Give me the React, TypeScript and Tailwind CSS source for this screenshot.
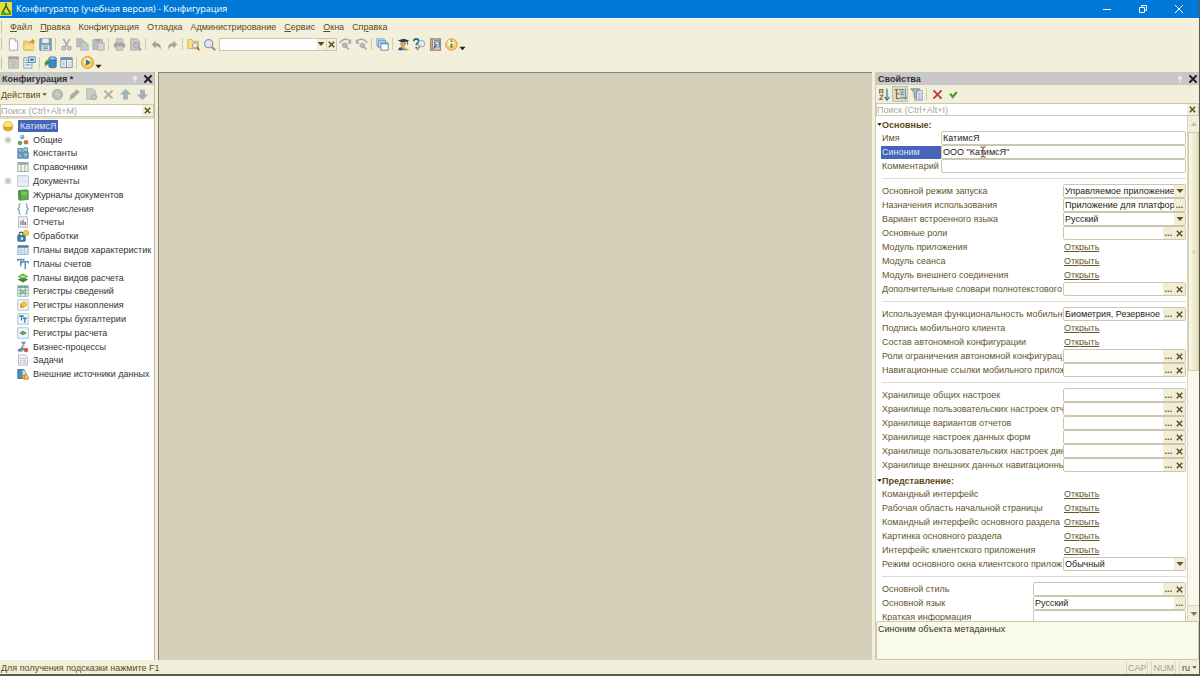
import React, { useState } from "react";

type IconName =
  | "newFile" | "open" | "save" | "cut" | "copy" | "paste" | "print" | "preview"
  | "undo" | "redo" | "findFolder" | "zoom" | "findNext" | "findPrev" | "windows"
  | "student" | "helpSearch" | "bookSearch" | "info" | "window" | "configTree"
  | "updateDb" | "form" | "play" | "add" | "edit" | "addCopy" | "remove" | "up" | "down"
  | "sphere" | "common" | "constants" | "catalogs" | "documents" | "journals" | "enums"
  | "reports" | "processing" | "characteristics" | "accounts" | "calcPlans" | "infoReg"
  | "accumReg" | "accountReg" | "calcReg" | "business" | "tasks" | "external"
  | "sort" | "category" | "filter" | "cancel" | "accept";

const G = "#a9abab";

const art: Record<IconName, React.ReactNode> = {
  newFile: <><path d="M3 1h7l3 3v11H3z" fill="#fff" stroke="#8ba3b8" /><path d="M10 1v3h3" fill="#cfe0ec" stroke="#8ba3b8" /></>,
  open: <><path d="M1 4h5l1 1h6v10H1z" fill="#f0cf6e" stroke="#cfa646" /><path d="M2 8h11v6H2z" fill="#fbe08c" /><path d="M8 6c0-3 2-3 3-3V1l4 3-4 3V5z" fill="#e0902c" /></>,
  save: <><path d="M1 1h14v14H1z" fill="#7f9fb5" stroke="#5d8099" /><path d="M4 1h8v5H4z" fill="#e9f1f6" /><path d="M3 9h10v6H3z" fill="#d3e1ea" /><path d="M5 11h6M5 13h6" stroke="#5d8099" /></>,
  cut: <><path d="M4 1l6 10M12 1L6 11" stroke={G} strokeWidth="2" /><circle cx="4.500" cy="12.500" r="2" fill="none" stroke={G} strokeWidth="2" /><circle cx="11.500" cy="12.500" r="2" fill="none" stroke={G} strokeWidth="2" /></>,
  copy: <><path d="M1 1h6l3 3v7H1z" fill="#bcc0c1" stroke={G} /><path d="M6 5h6l3 3v7H6z" fill="#c5c9c9" stroke={G} /></>,
  paste: <><path d="M1 2h12v12H1z" fill="#bbbfbf" stroke={G} /><path d="M4 1h6v3H4z" fill="#a0a2a2" /><path d="M7 6h8v9H7z" fill="#d2d5d4" stroke={G} /></>,
  print: <><path d="M4 1h8v5H4z" fill="#c9cbc9" stroke={G} /><rect x="1" y="6" width="14" height="6" rx="2" fill="#a3a6a6" /><path d="M4 10h8v5H4z" fill="#d0d0ce" stroke={G} /></>,
  preview: <><path d="M2 1h8l3 3v11H2z" fill="#c6c9c8" stroke={G} /><circle cx="9" cy="9" r="3.500" fill="#bfc3c4" stroke="#999" /><path d="M12 12l3 3" stroke="#999" strokeWidth="2" /></>,
  undo: <path d="M7 3v3c5 0 7 3 6 8-1-3-3-4-6-4v3L2 8z" fill="#9da59a" />,
  redo: <path d="M9 3v3c-5 0-7 3-6 8 1-3 3-4 6-4v3l5-5z" fill="#9dac9a" />,
  findFolder: <><path d="M1 2h5l1 2h7v9H1z" fill="#fadf87" stroke="#d0a445" /><circle cx="10" cy="9" r="3.500" fill="#dcebf5" stroke="#ad8b5c" /><path d="M12.500 11.500L15 15" stroke="#a6623c" strokeWidth="2" /></>,
  zoom: <><circle cx="7" cy="7" r="5" fill="#dce9f5" stroke="#8896a8" strokeWidth="1.500" /><path d="M11 11l4 4" stroke="#b88164" strokeWidth="2.500" /></>,
  findNext: <><path d="M1 6c3-5 9-6 13-2" fill="none" stroke={G} strokeWidth="2" /><path d="M15 1v6h-5z" fill={G} /><circle cx="7" cy="9" r="3" fill="#b3b8bb" stroke={G} /><path d="M9 11l3 3" stroke={G} strokeWidth="2" /></>,
  findPrev: <><path d="M15 6C12 1 6 0 2 4" fill="none" stroke={G} strokeWidth="2" /><path d="M1 1v6h5z" fill={G} /><circle cx="9" cy="9" r="3" fill="#b3b8bb" stroke={G} /><path d="M11 11l3 3" stroke={G} strokeWidth="2" /></>,
  windows: <><path d="M1 1h9v9H1z" fill="#d5e5ef" stroke="#6f9ab8" /><path d="M3 3h9v9H3z" fill="#bcd7e8" stroke="#5f8fb0" /><path d="M6 6h9v9H6z" fill="#fff" stroke="#417aa3" /><path d="M6 6h9v2H6z" fill="#6ea5c8" /></>,
  student: <><path d="M1 3l7-2 7 2-7 3z" fill="#173d61" /><path d="M4 5h7v3l-3 3-4-2z" fill="#d99a65" /><path d="M13 3v5" stroke="#173d61" /><path d="M2 15l4-5 3 1 5 4z" fill="#3f84b3" /><path d="M7 10l8 4-2 1-7-3z" fill="#e8bf3a" /><path d="M1 14l3-3 2 4z" fill="#2e4350" /></>,
  helpSearch: <><path d="M1 4c0-4 6-4 6 0 0 2-3 2-3 5M4 11v2" fill="none" stroke="#2c6479" strokeWidth="2" /><circle cx="10.500" cy="7" r="4" fill="#dcecf8" stroke="#7d9ab4" /><path d="M8 10l-3 5" stroke="#c47b52" strokeWidth="2" /></>,
  bookSearch: <><path d="M2 1h12v14H2z" fill="#dcd4c8" stroke="#a5835f" strokeWidth="1.500" /><path d="M4 1v14" stroke="#a5835f" strokeWidth="1.500" /><path d="M7 3h6v8H7z" fill="#cfe4f5" stroke="#467aa5" /><circle cx="10" cy="6.500" r="2" fill="#fff" stroke="#467aa5" /><path d="M9 8l-3 5" stroke="#40688c" strokeWidth="1.500" /></>,
  info: <><circle cx="8" cy="8" r="7" fill="#f8cf7e" stroke="#c98d35" /><circle cx="7" cy="6" r="4" fill="#fff0bd" /><path d="M8 7v5M8 3v2" stroke="#577a28" strokeWidth="2.200" /></>,
  window: <><path d="M2 1h12v14H2z" fill="#cdcdc8" stroke={G} /><path d="M2 1h12v3H2z" fill="#a5a8aa" /><path d="M5 7h6M5 10h6M5 13h4" stroke={G} /></>,
  configTree: <><path d="M1 2h10v13H1z" fill="#e9f2f8" stroke="#7196af" /><path d="M3 5h4M3 8h6M3 11h6" stroke="#4b7da0" /><path d="M7 1h8v7H7z" fill="#d9e9f5" stroke="#457a9f" /><path d="M9 3h4v3H9z" fill="#3f7ba8" /></>,
  updateDb: <><path d="M6 3v10c0 2 9 2 9 0V3z" fill="#3a8dc6" stroke="#28658f" /><ellipse cx="10.500" cy="3" rx="4.500" ry="2" fill="#9bd1ef" stroke="#28658f" /><path d="M1 14V7h2V4l4 4-4 4V9" fill="#39883c" /></>,
  form: <><path d="M1 2h14v12H1z" fill="#eef3f5" stroke="#637d90" /><path d="M1 2h14v3H1z" fill="#7391a7" /><path d="M8 5v9" stroke="#637d90" /><path d="M3 7h3M3 9h3M3 11h3M10 8h3M10 11h3" stroke="#9aacb8" /></>,
  play: <><circle cx="8" cy="8" r="7.300" fill="#ffcf50" stroke="#b9882c" /><circle cx="7" cy="6" r="4" fill="#fff0ad" /><path d="M6 4l6 4-6 4z" fill="#3274a3" /></>,
  add: <><circle cx="8" cy="8" r="7" fill="#b4beb0" /><path d="M8 4v8M4 8h8" stroke="#c9d0c5" strokeWidth="2" /></>,
  edit: <path d="M2 14l1-5 8-7 3 3-8 8z" fill="#a7aea1" stroke="#b7bbaf" />,
  addCopy: <><path d="M2 1h8l3 3v10H2z" fill="#c7cdc8" stroke="#b1b8b2" /><circle cx="11" cy="11" r="4" fill="#aeb9aa" /><path d="M11 9v4M9 11h4" stroke="#d8ded4" /></>,
  remove: <path d="M3 3l10 10M13 3L3 13" stroke="#b7afa4" strokeWidth="2.500" />,
  up: <path d="M8 1l7 7h-4v6H5V8H1z" fill="#a5b1b9" />,
  down: <path d="M8 15l7-7h-4V2H5v6H1z" fill="#a5b1b9" />,
  sphere: <><circle cx="8" cy="8" r="7" fill="#f0c545" /><path d="M1 9a7 6 0 0014 0z" fill="#dca52c" /><ellipse cx="8" cy="6" rx="5" ry="3" fill="#fbe38a" /></>,
  common: <><circle cx="7" cy="4" r="3" fill="#73aacb" /><circle cx="4" cy="12" r="3" fill="#58a854" /><circle cx="12" cy="11" r="3" fill="#c66f4a" /><circle cx="6" cy="3" r="1" fill="#d6ecf8" /></>,
  constants: <><path d="M1 2h6v6H1zM1 9h6v6H1zM8 7h7v8H8z" fill="#78a9c6" stroke="#39789e" /><path d="M9 1h5v5H9z" fill="#a9cce0" stroke="#39789e" /><path d="M3 4h2M3 11h2M10 10h3" stroke="#e4f1f8" /></>,
  catalogs: <><path d="M1 2h14v12H1z" fill="#f6f4de" stroke="#8297a3" /><path d="M1 2h14v3H1z" fill="#8cb0c5" /><path d="M5.500 2v12M10.500 2v12" stroke="#8297a3" /></>,
  documents: <><path d="M1 1h14v14H1z" fill="#edf4f8" stroke="#92afc4" /><path d="M4 4h6M4 7h8M4 10h8" stroke="#c4d7e4" /></>,
  journals: <><path d="M2 2l11-1 2 1v12l-12 1-1-2z" fill="#5fb04a" stroke="#40872f" /><path d="M4 2v12" stroke="#2d7428" /><path d="M6 5h7M6 7h7" stroke="#a4d68f" /></>,
  enums: <path d="M5 1C2 1 3 4 3 6L1 8l2 2c0 3-1 5 2 5M11 1c3 0 2 3 2 5l2 2-2 2c0 3 1 5-2 5" fill="none" stroke="#7f9fb2" strokeWidth="1.600" />,
  reports: <><path d="M2 1h12v14H2z" fill="#eef2f6" stroke="#9aaebd" /><path d="M5 12V7" stroke="#d17a67" strokeWidth="2" /><path d="M8 12V5" stroke="#628fb8" strokeWidth="2" /><path d="M11 12V8" stroke="#c44c44" strokeWidth="2" /></>,
  processing: <><rect x="1" y="7" width="10" height="8" rx="1" fill="#3d7fae" stroke="#23587e" /><path d="M3 7V5c0-3 5-3 5 0v2" fill="none" stroke="#23587e" strokeWidth="1.500" /><path d="M5 10h3v3H5z" fill="#e5f2fa" /><circle cx="12" cy="4" r="3.500" fill="#f2ca43" stroke="#cfa131" /></>,
  characteristics: <><path d="M1 2h14v12H1z" fill="#e4edf2" stroke="#8aa7ba" /><path d="M1 2h14v3H1z" fill="#477d9e" /><path d="M5 5v9M10 5v9M1 8h14M1 11h14" stroke="#b0c4d0" /></>,
  accounts: <path d="M1 4V2h8v2M5 2v9M7 7V5h8v2M11 5v10" fill="none" stroke="#5f97b8" strokeWidth="2" />,
  calcPlans: <><path d="M1 10l7-3 7 3-7 4z" fill="#38862e" /><path d="M1 6l7-4 7 4-7 4z" fill="#5dac3e" /><path d="M5 6h6" stroke="#d4edb9" strokeWidth="2" /></>,
  infoReg: <><path d="M1 1h14v14H1z" fill="#edf5ef" stroke="#719c9e" /><path d="M1 1h14v3H1z" fill="#7eaaa9" /><path d="M5 2v12M11 2v12M2 7h12M2 11h12" stroke="#4f9270" /><path d="M6 7h4v4H6z" fill="#80bb8a" /></>,
  accumReg: <><path d="M1 1h14v14H1z" fill="#f7f8f4" stroke="#92b3c6" /><path d="M4 6h5v6H4z" fill="#deaa32" /><circle cx="9.500" cy="7" r="3.300" fill="#f2c749" stroke="#d29f30" /></>,
  accountReg: <><path d="M1 1h14v14H1z" fill="#f3f8fb" stroke="#92b3c6" /><path d="M3 4h6M6 4v6M8 7h5M10.500 7v6" stroke="#377ba7" strokeWidth="1.700" /></>,
  calcReg: <><path d="M1 1h14v14H1z" fill="#f3f8fb" stroke="#92b3c6" /><path d="M3 8l5-3 5 3-5 3z" fill="#419339" /><path d="M6 8h4" stroke="#b8dda7" /></>,
  business: <><path d="M5 1h7l-3 5z" fill="#5a98c6" /><circle cx="8" cy="7" r="2" fill="#e0ad80" /><path d="M1 14c0-5 4-5 6-2l1 2z" fill="#4a7eae" /><circle cx="12" cy="12" r="3" fill="#d85b40" /><path d="M5 9l5 3" stroke="#507796" strokeWidth="2" /></>,
  tasks: <><path d="M2 1h9l3 3v11H2z" fill="#edf0f5" stroke="#9fb1c2" /><path d="M4 6h2M4 9h2M4 12h2" stroke="#d5785e" /><path d="M8 6h4M8 9h4M8 12h4" stroke="#91a7bb" /></>,
  external: <><path d="M1 2h8v12H1z" fill="#4d8dbb" stroke="#2f658c" /><path d="M7 3h4v9H7z" fill="#d8e9f3" stroke="#709bb7" /><circle cx="9" cy="12" r="2.500" fill="#e5ad31" stroke="#ad7b1c" /><path d="M12 7l3 5v3h-5v-3z" fill="#f1c85a" stroke="#ad7b1c" /></>,
  sort: <><path d="M2 7V2h4v5M2 5h4M2 9h4l-4 5h4" fill="none" stroke="#776e60" strokeWidth="1.300" /><path d="M11 1v12M8 11l3 4 3-4" fill="none" stroke="#4787a3" strokeWidth="1.700" /></>,
  category: <><path d="M1 2h4M3 2v11h4M3 7h4" fill="none" stroke="#796f52" strokeWidth="1.300" /><path d="M6 2h6M8 5h4M8 8h4M8 12h4" stroke="#5a8eaa" strokeWidth="1.600" /><path d="M14 1v12M12 11l2 3 2-3" fill="none" stroke="#3e7b9b" /></>,
  filter: <><path d="M6 3h9v12H6z" fill="#e0eaf0" stroke="#7695aa" /><path d="M10 7h3M10 10h3M10 13h3" stroke="#628ba5" /><path d="M1 1h11L8 6v7l-3-2V6z" fill="#a8b5ba" stroke="#74858c" /></>,
  cancel: <path d="M3 3l10 10M13 3L3 13" stroke="#c23a33" strokeWidth="2.300" />,
  accept: <path d="M4 7l3 4 5-6" fill="none" stroke="#489c26" strokeWidth="2.700" />,
};

function Icon({ name, className = "size-[13px]" }: { name: IconName; className?: string }) {
  return (
    <svg viewBox="0 0 16 16" className={`${className} shrink-0`} aria-hidden="true">
      {art[name]}
    </svg>
  );
}

function Cross({ className = "size-[9px]" }: { className?: string }) {
  return (
    <svg viewBox="0 0 10 10" className={`${className} shrink-0`} aria-hidden="true">
      <path d="M2 2l6 6M8 2L2 8" stroke="currentColor" strokeWidth="1.700" />
    </svg>
  );
}

function Caret({ className = "size-2" }: { className?: string }) {
  return (
    <svg viewBox="0 0 8 8" className={`${className} shrink-0`} aria-hidden="true">
      <path d="M0.500 2h7L4 6z" fill="currentColor" />
    </svg>
  );
}

function Tool({ name, label, active }: { name: IconName; label: string; active?: boolean }) {
  return (
    <button
      type="button"
      aria-label={label}
      className={`flex size-4 shrink-0 items-center justify-center ${active ? "border border-[#c5bfa4] bg-[#e0dbc0]" : ""}`}
    >
      <Icon name={name} />
    </button>
  );
}

function Divider() {
  return <span className="mx-0.5 h-3 w-px shrink-0 bg-[#cfcab0]" />;
}

function Grip() {
  return <span className="mr-[3px] h-3 w-px shrink-0 bg-[#c5c0a8]" />;
}

function PanelTitle({ title }: { title: string }) {
  return (
    <header className="flex h-[13px] shrink-0 items-center bg-[#c8c8c8] pl-0.5">
      <h2 className="grow font-bold text-[#33312b]">{title}</h2>
      <button type="button" aria-label="Закрепить" className="mr-1 flex">
        <svg viewBox="0 0 6 8" className="h-2 w-1.5" aria-hidden="true">
          <circle cx="3" cy="3" r="1.500" fill="#dedede" stroke="#f4f4f4" />
          <path d="M3 5v3" stroke="#eee" />
        </svg>
      </button>
      <button type="button" aria-label="Закрыть" className="text-[#1c1c1c]">
        <Cross className="block size-3" />
      </button>
    </header>
  );
}

function PanelSearch({ hint }: { hint: string }) {
  return (
    <div className="flex h-[13px] shrink-0 border border-[#cdc9ac] bg-white">
      <input aria-label="Поиск" placeholder={hint} className="min-w-0 grow outline-none placeholder:text-[#a5a5a5]" />
      <button type="button" aria-label="Очистить" className="flex w-[11px] items-center justify-center bg-[#f2efdb] text-[#5e531b]">
        <Cross />
      </button>
    </div>
  );
}

const menus: [string, string, string][] = [
  ["", "Ф", "айл"], ["", "П", "равка"], ["Конфигурация", "", ""], ["Отладка", "", ""],
  ["Администрирование", "", ""], ["", "С", "ервис"], ["", "О", "кна"], ["Сп", "р", "авка"],
];

const tree: { icon: IconName; text: string; branch?: boolean }[] = [
  { icon: "common", text: "Общие", branch: true },
  { icon: "constants", text: "Константы" },
  { icon: "catalogs", text: "Справочники" },
  { icon: "documents", text: "Документы", branch: true },
  { icon: "journals", text: "Журналы документов" },
  { icon: "enums", text: "Перечисления" },
  { icon: "reports", text: "Отчеты" },
  { icon: "processing", text: "Обработки" },
  { icon: "characteristics", text: "Планы видов характеристик" },
  { icon: "accounts", text: "Планы счетов" },
  { icon: "calcPlans", text: "Планы видов расчета" },
  { icon: "infoReg", text: "Регистры сведений" },
  { icon: "accumReg", text: "Регистры накопления" },
  { icon: "accountReg", text: "Регистры бухгалтерии" },
  { icon: "calcReg", text: "Регистры расчета" },
  { icon: "business", text: "Бизнес-процессы" },
  { icon: "tasks", text: "Задачи" },
  { icon: "external", text: "Внешние источники данных" },
];

type Kind = "text" | "select" | "pick" | "pickClear" | "link";
type Prop = { label: string; kind: Kind; value?: string; selected?: boolean };

const open = (label: string): Prop => ({ label, kind: "link" });
const pick = (label: string, value = ""): Prop => ({ label, kind: "pickClear", value });

const naming: Prop[] = [
  { label: "Имя", kind: "text", value: "КатимсЯ" },
  { label: "Синоним", kind: "text", value: 'ООО "КатимсЯ"', selected: true },
  { label: "Комментарий", kind: "text" },
];
const launch: Prop[] = [
  { label: "Основной режим запуска", kind: "select", value: "Управляемое приложение" },
  { label: "Назначения использования", kind: "pick", value: "Приложение для платфор" },
  { label: "Вариант встроенного языка", kind: "select", value: "Русский" },
  pick("Основные роли"),
  open("Модуль приложения"),
  open("Модуль сеанса"),
  open("Модуль внешнего соединения"),
  pick("Дополнительные словари полнотекстового"),
];
const mobile: Prop[] = [
  pick("Используемая функциональность мобильно", "Биометрия, Резервное"),
  open("Подпись мобильного клиента"),
  open("Состав автономной конфигурации"),
  pick("Роли ограничения автономной конфигурац"),
  pick("Навигационные ссылки мобильного прилож"),
];
const storage: Prop[] = [
  pick("Хранилище общих настроек"),
  pick("Хранилище пользовательских настроек отч"),
  pick("Хранилище вариантов отчетов"),
  pick("Хранилище настроек данных форм"),
  pick("Хранилище пользовательских настроек дин"),
  pick("Хранилище внешних данных навигационных"),
];
const view: Prop[] = [
  open("Командный интерфейс"),
  open("Рабочая область начальной страницы"),
  open("Командный интерфейс основного раздела"),
  open("Картинка основного раздела"),
  open("Интерфейс клиентского приложения"),
  { label: "Режим основного окна клиентского прилож", kind: "select", value: "Обычный" },
];
const style: Prop[] = [
  pick("Основной стиль"),
  { label: "Основной язык", kind: "pick", value: "Русский" },
  { label: "Краткая информация", kind: "text" },
];

function PropRow({ prop, id, columns }: { prop: Prop; id: string; columns: string }) {
  const [value, setValue] = useState(prop.value ?? "");
  const labelTone = prop.selected ? "bg-[#4564ba] text-[#dfe6f8]" : "text-[#64552b]";
  const side = "flex w-[11px] shrink-0 items-center justify-center bg-[#f1edd6] text-[#5e531b]";
  return (
    <div className={`grid h-3.5 items-center ${columns}`}>
      <label htmlFor={id} className={`h-[13px] whitespace-nowrap pl-px leading-[13px] ${labelTone}`}>
        {prop.label}
      </label>
      {prop.kind === "link" ? (
        <a id={id} href="#" className="justify-self-start pl-px text-[#64552b] underline">Открыть</a>
      ) : (
        <div className="relative flex h-3.5 min-w-0 rounded-xs border border-[#cbc7ae] bg-white">
          {prop.kind === "select" ? (
            <>
              <select id={id} className="min-w-0 grow appearance-none pl-px text-[#262420] outline-none">
                <option>{prop.value}</option>
              </select>
              <span className={side}><Caret /></span>
            </>
          ) : (
            <input
              id={id}
              value={value}
              onChange={(e) => setValue(e.target.value)}
              className="min-w-0 grow pl-px text-[#262420] outline-none"
            />
          )}
          {(prop.kind === "pick" || prop.kind === "pickClear") && (
            <button type="button" aria-label={`Выбрать: ${prop.label}`} className={`${side} font-bold`}>...</button>
          )}
          {prop.kind === "pickClear" && (
            <button type="button" aria-label={`Очистить: ${prop.label}`} onClick={() => setValue("")} className={side}>
              <Cross />
            </button>
          )}
          {prop.selected && (
            <svg viewBox="0 0 8 12" className="absolute left-[37px] top-0 h-3 w-2" aria-hidden="true">
              <path d="M1.500 1h2l.5.500.500-.500h2M4 1.500v9M1.500 11h2l.500-.500.500.500h2" fill="none" stroke="#4b3a30" />
            </svg>
          )}
        </div>
      )}
    </div>
  );
}

function PropGroup({ name, items, columns }: { name: string; items: Prop[]; columns: string }) {
  return (
    <div>
      {items.map((p, i) => (
        <PropRow key={p.label} prop={p} id={`${name}-${i}`} columns={columns} />
      ))}
    </div>
  );
}

function Rule() {
  return <hr className="my-[5px] ml-px border-[#dcdad2]" />;
}

function GroupTitle({ children }: { children: React.ReactNode }) {
  return (
    <h3 className="-ml-1 flex h-[13px] items-center font-bold text-[#5b4b17]">
      <Caret className="size-[5px] text-black" />
      {children}
    </h3>
  );
}

const wide = "grid-cols-[182px_minmax(0,1fr)]";

export default function App() {
  return (
    <div className="flex h-screen flex-col overflow-hidden border-b-2 border-r border-[#5d5b50] bg-[#f2efdb] font-['Liberation_Sans',sans-serif] text-[9px] leading-[12px] text-[#5b4c22]">
      <div className="flex h-[18px] shrink-0 items-center bg-[#0078d7] text-white">
        <svg viewBox="0 0 12 14" className="h-3.5 w-3" aria-hidden="true">
          <path d="M0 0h12v14H0z" fill="#e9dc3c" />
          <path d="M6 1v3M6 4l-4 7M6 4l4 7" stroke="#2d5a2c" strokeWidth="1.500" />
          <path d="M1 12c2-3 3-3 5-1s3 0 5-3v5H1z" fill="#3fa337" />
        </svg>
        <h1 className="ml-1 grow font-['Open_Sans',sans-serif]">Конфигуратор (учебная версия) - Конфигурация</h1>
        <button type="button" aria-label="Свернуть" className="flex w-9 justify-center">
          <svg viewBox="0 0 10 10" className="size-2.5"><path d="M1 5.500h8" stroke="#fff" /></svg>
        </button>
        <button type="button" aria-label="Восстановить" className="flex w-9 justify-center">
          <svg viewBox="0 0 10 10" className="size-2.5" fill="none" stroke="#fff"><path d="M1.500 3.500h5v5h-5zM3.500 3V1.500h5v5H7" /></svg>
        </button>
        <button type="button" aria-label="Закрыть" className="mr-0.5 flex w-9 justify-center">
          <svg viewBox="0 0 10 10" className="size-2.5"><path d="M1 1l8 8M9 1L1 9" stroke="#fff" /></svg>
        </button>
      </div>

      <nav className="flex h-[17px] shrink-0 items-center border-t border-[#fbfaf0] pl-px">
        <span className="mr-2 h-3 w-px bg-[#c5c0a8]" />
        <div className="flex gap-2">
          {menus.map(([before, key, after]) => (
            <button type="button" key={before + key + after}>
              {before}<span className="underline">{key}</span>{after}
            </button>
          ))}
        </div>
      </nav>

      <div className="flex h-[18px] shrink-0 items-center pl-px">
        <Grip />
        <Tool name="newFile" label="Новый" />
        <Tool name="open" label="Открыть файл" />
        <Tool name="save" label="Сохранить" />
        <Divider />
        <Tool name="cut" label="Вырезать" />
        <Tool name="copy" label="Копировать" />
        <Tool name="paste" label="Вставить" />
        <Divider />
        <Tool name="print" label="Печать" />
        <Tool name="preview" label="Просмотр" />
        <Divider />
        <Tool name="undo" label="Отменить" />
        <Tool name="redo" label="Вернуть" />
        <Divider />
        <Tool name="findFolder" label="Поиск в файлах" />
        <Tool name="zoom" label="Найти" />
        <div className="ml-0.5 flex h-[13px] w-[118px] shrink-0 border border-[#cbc7ae] bg-white">
          <input aria-label="Строка поиска" className="min-w-0 grow outline-none" />
          <button type="button" aria-label="История поиска" className="flex w-[11px] items-center justify-center bg-[#f2efdb] text-[#5e4b1b]"><Caret /></button>
          <button type="button" aria-label="Очистить поиск" className="flex w-[11px] items-center justify-center border-l border-[#d9d5bf] bg-[#f2efdb] text-[#5e4b1b]"><Cross /></button>
        </div>
        <Tool name="findNext" label="Найти далее" />
        <Tool name="findPrev" label="Найти ранее" />
        <Divider />
        <Tool name="windows" label="Окна" />
        <Divider />
        <Tool name="student" label="Обучение" />
        <Tool name="helpSearch" label="Поиск в справке" />
        <Tool name="bookSearch" label="Синтакс-помощник" />
        <Tool name="info" label="О программе" />
        <button type="button" aria-label="Ещё" className="mt-2 text-[#2c2408]"><Caret className="block size-[7px]" /></button>
      </div>

      <div className="flex h-[19px] shrink-0 items-center pl-px">
        <Grip />
        <Tool name="window" label="Закрыть конфигурацию" />
        <Tool name="configTree" label="Открыть конфигурацию" />
        <Divider />
        <Tool name="updateDb" label="Обновить базу данных" />
        <Tool name="form" label="Окно конфигурации" />
        <Divider />
        <Tool name="play" label="Начать отладку" />
        <button type="button" aria-label="Ещё" className="mt-2 text-[#2c2408]"><Caret className="block size-[7px]" /></button>
      </div>

      <main className="flex min-h-0 grow">
        <section className="flex w-[155px] shrink-0 flex-col border-r border-[#bdb99f]">
          <PanelTitle title="Конфигурация *" />
          <div className="flex h-[19px] shrink-0 items-center gap-px">
            <button type="button" className="flex w-12 items-center gap-0.5 pl-px">
              Действия<Caret className="size-[5px]" />
            </button>
            <Tool name="add" label="Добавить" />
            <Tool name="edit" label="Изменить" />
            <Tool name="addCopy" label="Добавить копированием" />
            <Tool name="remove" label="Удалить" />
            <Tool name="up" label="Переместить вверх" />
            <Tool name="down" label="Переместить вниз" />
          </div>
          <PanelSearch hint="Поиск (Ctrl+Alt+M)" />
          <div className="min-h-0 grow border-t-2 border-[#e3dfc4] bg-white text-[#35332e]">
            <ul className="grid h-[262px] auto-rows-fr">
              <li className="flex items-center gap-1 pl-0.5">
                <Icon name="sphere" className="size-3" />
                <span className="bg-[#4564ba] px-0.5 text-[#dfe6f8]">КатимсЯ</span>
              </li>
              {tree.map((n) => (
                <li key={n.text} className="flex items-center whitespace-nowrap pl-1">
                  <span className="mr-[5px] flex w-2 justify-center">
                    {n.branch && (
                      <svg viewBox="0 0 8 8" className="size-2" aria-hidden="true">
                        <circle cx="4" cy="4" r="3" fill="#f3f3f3" stroke="#c9c9c9" />
                        <path d="M2.500 4h3M4 2.500v3" stroke="#8a8a8a" />
                      </svg>
                    )}
                  </span>
                  <Icon name={n.icon} className="mr-1 size-3" />
                  {n.text}
                </li>
              ))}
            </ul>
          </div>
        </section>

        <section aria-label="Рабочая область" className="ml-[3px] grow border-l border-t border-[#85837a] bg-[#d6d0bb]" />

        <section className="ml-[3px] flex w-[324px] shrink-0 flex-col border-l border-[#d2cdb2]">
          <PanelTitle title="Свойства" />
          <div className="flex h-[18px] shrink-0 items-center">
            <Tool name="sort" label="По алфавиту" />
            <Tool name="category" label="По категориям" active />
            <Tool name="filter" label="Только важные" />
            <Divider />
            <Tool name="cancel" label="Отменить изменения" />
            <Tool name="accept" label="Применить" />
          </div>
          <PanelSearch hint="Поиск (Ctrl+Alt+I)" />
          <div className="flex min-h-0 grow bg-white">
            <div className="min-w-0 grow overflow-hidden pl-[5px] pr-px pt-0.5">
              <GroupTitle>Основные:</GroupTitle>
              <PropGroup name="naming" items={naming} columns="grid-cols-[60px_minmax(0,1fr)]" />
              <Rule />
              <PropGroup name="launch" items={launch} columns={wide} />
              <Rule />
              <PropGroup name="mobile" items={mobile} columns={wide} />
              <Rule />
              <PropGroup name="storage" items={storage} columns={wide} />
              <div className="h-0.5" />
              <GroupTitle>Представление:</GroupTitle>
              <PropGroup name="view" items={view} columns={wide} />
              <Rule />
              <PropGroup name="style" items={style} columns="grid-cols-[152px_minmax(0,1fr)]" />
            </div>
            <div className="flex w-3 shrink-0 flex-col border-l border-[#dcd8c0] bg-[#faf8ee]">
              <button type="button" aria-label="Прокрутить вверх" className="flex h-4 shrink-0 items-center justify-center bg-[#f2efdb] text-[#c4c0aa]"><Caret className="size-2 rotate-180" /></button>
              <div className="flex h-[239px] items-center justify-center border border-[#d2cba2] bg-linear-to-r from-[#fbf9ea] to-[#e6e0bb]"><span className="size-1 rounded-full bg-[#dcd7b8]" /></div>
              <div className="grow" />
              <button type="button" aria-label="Прокрутить вниз" className="flex h-4 shrink-0 items-center justify-center border-t border-[#d9d5bf] bg-[#f2efdb] text-[#817c66]"><Caret /></button>
            </div>
          </div>
          <p className="h-[39px] shrink-0 rounded-xs border border-[#cbc7ae] bg-[#fafae8] pl-px pt-px text-[#35332e]">Синоним объекта метаданных</p>
        </section>
      </main>

      <footer className="flex h-3.5 shrink-0 items-center gap-[3px] pl-px pt-px">
        <p className="grow">Для получения подсказки нажмите F1</p>
        <span className="border-x border-[#dbd7c0] px-px text-[#aaa27f]">CAP</span>
        <span className="border-x border-[#dbd7c0] px-px text-[#aaa27f]">NUM</span>
        <button type="button" className="flex items-center gap-0.5 border-l border-[#dbd7c0] px-0.5">ru<Caret className="size-[5px]" /></button>
      </footer>
    </div>
  );
}
